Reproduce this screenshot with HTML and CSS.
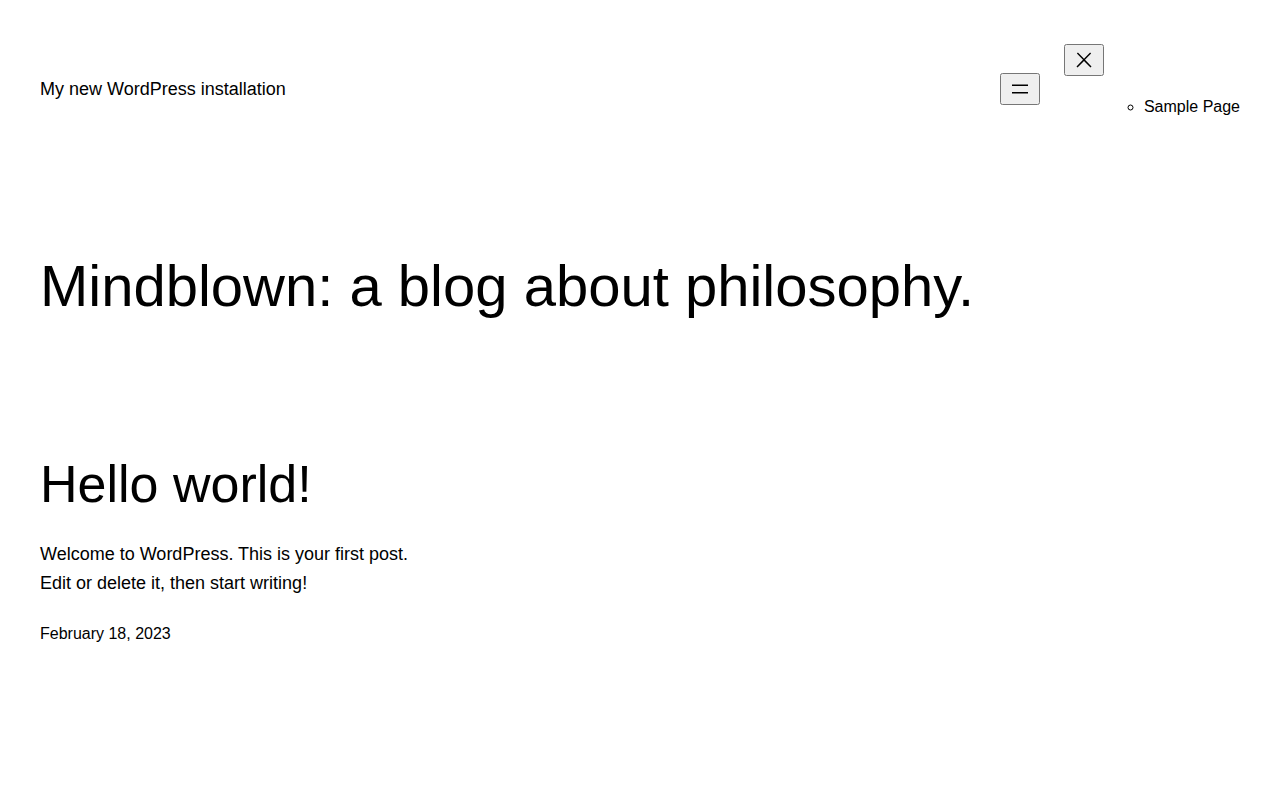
FILE: index.html
```html
<!DOCTYPE html>
<html lang="en">
<head>
<meta charset="utf-8">
<title>My new WordPress installation</title>
<link rel="stylesheet" href="styles.css">
</head>
<body>
<header class="site-header">
  <p class="site-title">My new WordPress installation</p>
  <nav class="site-nav">
    <button class="nav-btn" aria-label="Open menu">
      <svg width="24" height="24" viewBox="0 0 24 24" aria-hidden="true"><rect x="4" y="7.5" width="16" height="1.5"/><rect x="4" y="15" width="16" height="1.5"/></svg>
    </button>
    <div class="nav-container">
      <button class="nav-btn" aria-label="Close menu">
        <svg width="24" height="24" viewBox="0 0 24 24" aria-hidden="true"><path d="M13 11.8l6.1-6.3-1-1-6.1 6.2-6.1-6.2-1 1 6.1 6.3-6.5 6.7 1 1 6.5-6.6 6.5 6.6 1-1z"/></svg>
      </button>
      <ul class="nav-list">
        <li>Sample Page</li>
      </ul>
    </div>
  </nav>
</header>
<main class="content">
  <h1 class="page-title">Mindblown: a blog about philosophy.</h1>
  <article class="post">
    <h2 class="post-title">Hello world!</h2>
    <p class="post-excerpt">Welcome to WordPress. This is your first post.<br>Edit or delete it, then start writing!</p>
    <p class="post-date">February 18, 2023</p>
  </article>
</main>
</body>
</html>
```
FILE: styles.css
```css
html, body {
  background: #ffffff;
  color: #000000;
}
body {
  margin: 0;
  font-family: "Liberation Sans", Arial, sans-serif;
}
.site-header {
  display: flex;
  justify-content: space-between;
  align-items: center;
  padding: 0 40px;
  margin-top: 44px;
}
.site-title {
  margin: 0;
  font-size: 18px;
}
.site-nav {
  display: flex;
  align-items: center;
  gap: 24px;
}
.nav-btn {
  display: block;
  padding: 2px 6px;
}
.nav-btn svg {
  display: block;
  fill: currentColor;
}
.nav-container {
  display: flex;
  align-items: flex-start;
}
.nav-list {
  margin: 54px 0 18px;
  padding-left: 40px;
  list-style: circle;
  font-size: 16px;
}
.content {
  padding: 0 40px;
}
.page-title {
  margin: 117px 0 0;
  font-size: 58px;
  line-height: 1.2;
  font-weight: 400;
}
.post-title {
  margin: 132px 0 0;
  font-size: 52px;
  line-height: 1.2;
  font-weight: 400;
}
.post-excerpt {
  margin: 25px 0 0;
  font-size: 18px;
  line-height: 29px;
}
.post-date {
  margin: 27px 0 0;
  font-size: 16px;
}
```
